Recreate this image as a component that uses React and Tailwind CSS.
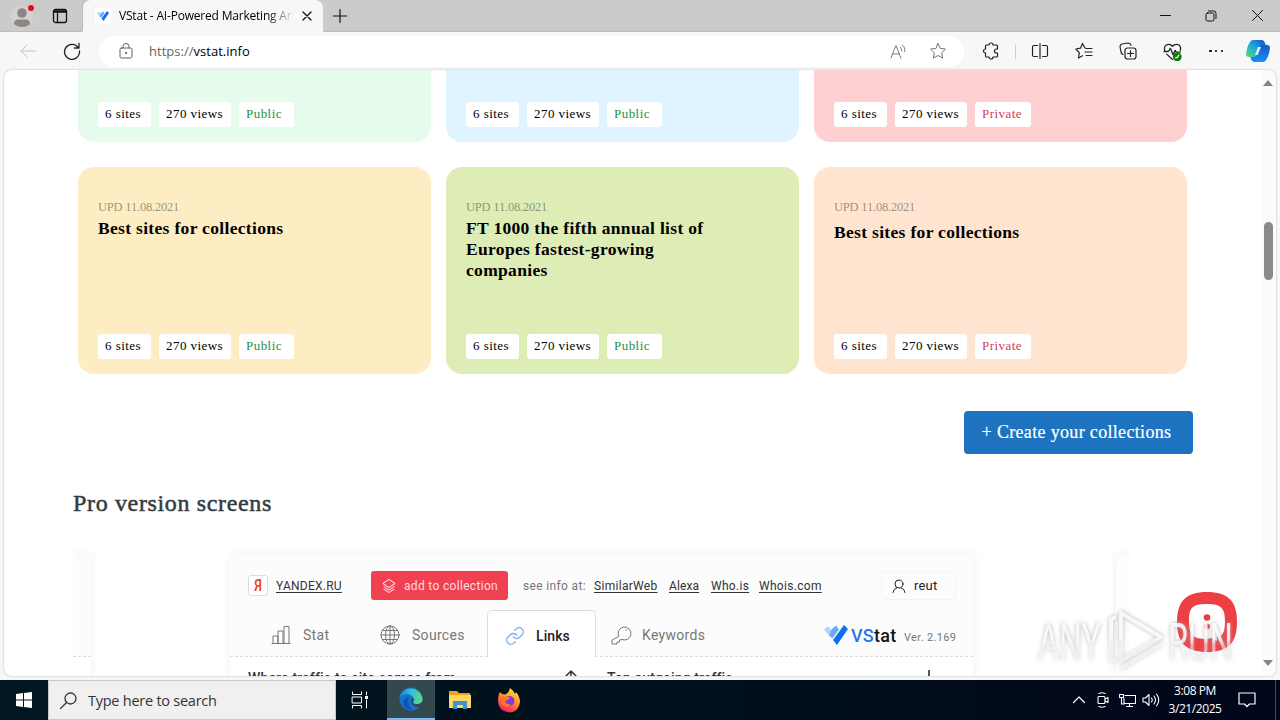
import { VscLayers } from "react-icons/vsc";

const uiFont = "font-['Open_Sans','Noto_Sans',sans-serif]";

const topCards = [
  { color: "bg-[#e7fbec]", width: "w-[353px]", access: "Public" },
  { color: "bg-[#dff4fe]", width: "w-[353px]", access: "Public" },
  { color: "bg-[#fed0d1]", width: "w-[373px]", access: "Private" },
];

const cards = [
  {
    color: "bg-[#feecc2]",
    width: "w-[353px]",
    access: "Public",
    title: "Best sites for collections",
    gap: "mt-[2px]",
  },
  {
    color: "bg-[#deecb6]",
    width: "w-[353px]",
    access: "Public",
    title: "FT 1000 the fifth annual list of Europes fastest-growing companies",
    gap: "mt-[2px]",
  },
  {
    color: "bg-[#ffe4cf]",
    width: "w-[373px]",
    access: "Private",
    title: "Best sites for collections",
    gap: "mt-[6px]",
  },
];

const Icon = ({ size = 18, box = 18, stroke = 1, className = "", children }) => (
  <svg
    width={size}
    height={size}
    viewBox={`0 0 ${box} ${box}`}
    fill="none"
    stroke="currentColor"
    strokeWidth={stroke}
    strokeLinecap="round"
    strokeLinejoin="round"
    className={`shrink-0 ${className}`}
  >
    {children}
  </svg>
);

const VLogo = ({ width, height }) => (
  <svg width={width} height={height} viewBox="0 0 24 20" className="shrink-0">
    <path d="M0 4.500L4 1l3.500 4.500L4 9.500z" fill="#b5d2fb" />
    <path d="M7.500 4.500L12 .5l3 4L8.500 13.500 4.500 10z" fill="#6cabfb" />
    <path d="M20 0l4 4-11 16-4-5z" fill="#0d6ff2" />
  </svg>
);

const TabBar = () => (
  <div className="flex h-8 bg-[#cbcbcb] text-[#111]">
    <div className="flex h-8 w-[83px] items-center rounded-br-md border-r border-b border-[#bcbcbc]">
      <svg width="26" height="24" viewBox="0 0 26 24" className="ml-[10px] shrink-0">
        <circle cx="12" cy="13" r="11" fill="#d4d2d0" />
        <circle cx="12" cy="9" r="4.800" fill="#8b8784" />
        <path d="M4 20q0-4.500 4-4.500h8q4 0 4 4.500-3 3-8 3t-8-3" fill="#8b8784" />
        <circle cx="21" cy="4" r="3" fill="#e00b1c" />
      </svg>
      <Icon size={16} box={16} stroke={1.3} className="ml-4">
        <rect x="1.500" y="1.500" width="13" height="13" rx="2" />
        <path d="M2 4h12M2 3h12M5.500 4v10" />
      </Icon>
    </div>
    <div className="flex h-8 w-60 items-center rounded-t-lg bg-[#f7f7f7]">
      <div className="ml-3 flex size-4 items-center justify-center bg-white">
        <VLogo width={12} height={10} />
      </div>
      <span className="ml-2 w-[173px] overflow-hidden text-[12px] tracking-[-0.2px] whitespace-nowrap text-black [mask-image:linear-gradient(to_right,black_148px,transparent_175px)]">
        VStat - AI-Powered Marketing Analytics
      </span>
      <Icon size={10} box={10} stroke={1.3} className="ml-[10px]">
        <path d="M1 1l8 8M9 1l-8 8" />
      </Icon>
    </div>
    <div className="flex flex-1 items-center border-b border-[#bcbcbc]">
      <Icon size={14} box={14} stroke={1.2} className="ml-[10px]">
        <path d="M7 .5v13M.5 7h13" />
      </Icon>
      <Icon size={11} box={11} className="ml-auto">
        <path d="M.5 5.500h10" />
      </Icon>
      <Icon size={12} box={12} className="ml-[34px]">
        <rect x="1" y="3" width="8" height="8" rx="1.500" />
        <path d="M3.500 1h5q2.500 0 2.500 2.500v5" />
      </Icon>
      <Icon size={11} box={11} className="mr-[17px] ml-[35px]">
        <path d="M.5.5l10 10M10.500.5l-10 10" />
      </Icon>
    </div>
  </div>
);

const AddressBar = () => (
  <div className="flex h-[38px] items-center bg-[#f7f7f7] text-[#222]">
    <Icon size={16} box={16} className="ml-5 text-[#c4c4c4]">
      <path d="M15.500 8H1M7 2L1 8l6 6" />
    </Icon>
    <Icon size={18} stroke={1.3} className="ml-[27px]">
      <path d="M15.500 6A7.500 7.500 0 1 0 16.500 9M16 1.500V6h-4.500" />
    </Icon>
    <div className="ml-[18px] flex h-[31px] w-[865px] items-center rounded-full bg-white">
      <Icon size={16} box={16} className="ml-[19px] text-[#606060]">
        <rect x="2" y="5" width="12" height="10" rx="1.500" />
        <path d="M5 5V3.500a3 3 0 0 1 6 0V5" />
        <circle cx="8" cy="10" r=".6" fill="currentColor" />
      </Icon>
      <span className="ml-[15px] pt-px text-[13px] tracking-[0.02px] text-black">
        <span className="text-[#666]">https://</span>vstat.info
      </span>
      <Icon size={17} className="ml-auto text-[#757575]">
        <path d="M1 16L6 3h.6L11.500 16M2.800 11.500h7M11 4.500q2 1.500 1.500 4M13 2q3.500 2.500 2.500 7" />
      </Icon>
      <Icon size={18} className="mr-[17px] ml-[22px] text-[#757575]">
        <path d="M9 1.500l2.300 4.900 5.200.7-3.800 3.700.9 5.300L9 13.500l-4.600 2.600.9-5.300L1.500 7.100l5.200-.7z" />
      </Icon>
    </div>
    <Icon size={18} stroke={1.2} className="ml-[18px]">
      <path d="M4.500 3H7a2 2 0 0 1 4 0h3.500q1 0 1 1v3h-1a2 2 0 0 0 0 4h1v3q0 1-1 1H11a2 2 0 0 1-4 0H4.500q-1 0-1-1v-3a2 2 0 0 1 0-4V4q0-1 1-1z" />
    </Icon>
    <div className="ml-[15px] h-[15px] w-px bg-[#d0d0d0]" />
    <Icon size={18} stroke={1.2} className="ml-[15px]">
      <path d="M6.500 3.500H3q-1.500 0-1.500 1.500v8q0 1.500 1.500 1.500h3.500M11.500 3.500H15q1.500 0 1.500 1.500v8q0 1.500-1.500 1.500h-3.500M9 1.500v15" />
    </Icon>
    <Icon size={18} stroke={1.2} className="ml-[26px]">
      <path d="M10 6L7.500 1.500 5.500 6.200.8 7l3.500 3.700-.8 5.300 4-2.300M11 6.500h6M10 10h7M11 13.500h6" />
    </Icon>
    <Icon size={18} stroke={1.2} className="ml-[26px]">
      <rect x="6" y="6" width="11" height="11" rx="2.500" />
      <path d="M11.500 8.500v6M8.500 11.500h6M4 12.500Q2.500 12 2 10L1 4.500Q1 2.500 3 2l6-1q2.500 0 3 2.500" />
    </Icon>
    <Icon size={19} stroke={1.2} className="ml-[26px]">
      <path d="M1.500 8Q.5 3 5 2.200q2.800-.2 4 2 1.500-2.200 4.200-2 4.300.8 3.300 5.800M1 9h4l2-3 2.500 6L11.500 8l1 1.500h4M3.500 11.500L9 16.500" />
      <circle cx="13.500" cy="14" r="3.600" fill="#107c10" stroke="#107c10" />
      <path d="M12 15l1.500-.5 1.500-2" stroke="#fff" />
    </Icon>
    <div className="ml-[25px] flex w-[18px] justify-between px-[2px]">
      <span className="size-[2.500px] rounded-full bg-black" />
      <span className="size-[2.500px] rounded-full bg-black" />
      <span className="size-[2.500px] rounded-full bg-black" />
    </div>
    <svg width="24" height="24" viewBox="0 0 24 24" className="ml-[21px] shrink-0">
      <defs>
        <linearGradient id="copilotA" x1="1" y1="0" x2="0" y2="1">
          <stop stopColor="#174ebd" />
          <stop offset=".5" stopColor="#18a8e0" />
          <stop offset="1" stopColor="#61d96e" />
        </linearGradient>
        <linearGradient id="copilotB" x1="0" y1="0" x2="0" y2="1">
          <stop stopColor="#155bc7" />
          <stop offset="1" stopColor="#1690f4" />
        </linearGradient>
      </defs>
      <path d="M7 1h9q2 0 3 3l1 3h-4q-2 0-3 2l-3 7q-1 2-3 2H3q-3 0-3-3Q1 7 4 3q1-2 3-2z" fill="url(#copilotA)" />
      <path d="M17 6h4q3 0 3 3-1 8-4 12-1 2-3 2H8q-2 0-3-3l-.5-2H7q2 0 3-2l3-7q1-3 4-3z" fill="url(#copilotB)" />
      <path d="M12 8h3l-3.500 8H9z" fill="#e7f7ff" />
    </svg>
  </div>
);

const Tags = ({ access }) => (
  <div className="flex gap-2 text-[13px] leading-[24px] tracking-[0.45px] whitespace-nowrap text-black">
    <span className="h-[25px] w-[53px] rounded-[3px] bg-white pl-[7px]">6 sites</span>
    <span className="h-[25px] w-[72px] rounded-[3px] bg-white pl-[7px]">270 views</span>
    {access === "Public" ? (
      <span className="h-[25px] w-[55px] rounded-[3px] bg-white pl-[7px] text-[#209044]">Public</span>
    ) : (
      <span className="h-[25px] w-[56px] rounded-[3px] bg-white pl-[7px] text-[#d5405a]">Private</span>
    )}
  </div>
);

const Collections = () => (
  <>
    <div className="flex gap-[15px] pl-[74px]">
      {topCards.map((card, index) => (
        <div key={index} className={`flex h-[72px] items-end rounded-b-2xl pb-[15px] pl-5 ${card.color} ${card.width}`}>
          <Tags access={card.access} />
        </div>
      ))}
    </div>
    <div className="mt-[25px] flex gap-[15px] pl-[74px]">
      {cards.map((card, index) => (
        <div
          key={index}
          className={`flex h-[207px] flex-col rounded-2xl pt-8 pb-[15px] pl-5 ${card.color} ${card.width}`}
        >
          <span className="text-[12.500px] leading-[17px] tracking-[-0.2px] text-black/40">UPD 11.08.2021</span>
          <h3 className={`w-[250px] text-[17.500px] leading-[21px] font-bold tracking-[0.32px] text-black ${card.gap}`}>
            {card.title}
          </h3>
          <div className="mt-auto">
            <Tags access={card.access} />
          </div>
        </div>
      ))}
    </div>
    <button className="mt-[37px] ml-[960px] block h-[43px] w-[229px] rounded bg-[#1d73c0] pr-[4px] text-[18px] tracking-[0.33px] whitespace-nowrap text-white [-webkit-text-stroke:0.2px_white]">
      + Create your collections
    </button>
  </>
);

const SlideHeader = () => (
  <div className="flex h-[103px] flex-col border-b border-dashed border-[#ddd] bg-[#fcfcfc]">
    <div className="flex h-[57px] items-center pt-[7px] pl-[18px] text-[12px]">
      <span className="flex h-[21px] w-5 items-center justify-center rounded-[3px] border border-[#ddd] bg-white text-[17px] font-bold text-[#ea4b43]">
        <span className="scale-x-75">Я</span>
      </span>
      <span className="ml-2 w-[95px] tracking-[0.25px] text-[#333] underline underline-offset-2">YANDEX.RU</span>
      <span className="flex h-[29px] w-[137px] items-center rounded-[3px] bg-[#f04152] tracking-[0.32px] whitespace-nowrap text-[#ffdce0]">
        <VscLayers className="mr-[7px] ml-[10px] size-4" />
        add to collection
      </span>
      <span className="ml-[15px] w-[71px] tracking-[0.35px] whitespace-nowrap text-[#777]">see info at:</span>
      <span className="w-[75px] tracking-[0.3px] text-[#333] underline underline-offset-2">SimilarWeb</span>
      <span className="w-[42px] tracking-[0.1px] text-[#333] underline underline-offset-2">Alexa</span>
      <span className="w-[48px] tracking-[0.3px] text-[#333] underline underline-offset-2">Who.is</span>
      <span className="w-[122px] tracking-[0.3px] text-[#333] underline underline-offset-2">Whois.com</span>
      <span className="flex h-[29px] w-[75px] items-center rounded border border-[#f3f3f3] text-[13px] tracking-[0.2px] text-[#222]">
        <Icon size={14} box={14} className="mr-[8px] ml-[10px]">
          <circle cx="7" cy="5" r="4" />
          <path d="M1 13.500Q1.500 9.500 5 8.700M13 13.500Q12.500 9.500 9 8.700" />
        </Icon>
        reut
      </span>
    </div>
    <div className="flex h-[46px] text-[14px] tracking-[0.3px] whitespace-nowrap text-[#777]">
      <div className="flex items-center pt-1">
        <Icon size={20} box={20} className="ml-[41px]">
          <path d="M1 18.500h18M2 18v-7h5v7M7 18V6h5v12M13 18V1.500h5V18" />
        </Icon>
        <span className="ml-3 w-[77px] pt-px">Stat</span>
        <Icon size={20} box={20}>
          <circle cx="10" cy="10" r="9" />
          <ellipse cx="10" cy="10" rx="4.500" ry="9" />
          <path d="M1 10h18M10 1v18M2.500 5.500h15M2.500 14.500h15" />
        </Icon>
        <span className="ml-3 w-[75px] pt-px">Sources</span>
      </div>
      <div className="-mb-px flex h-[47px] w-[109px] items-center rounded-t-[5px] border border-b-0 border-[#ddd] bg-white pt-1 text-[#222]">
        <Icon size={20} box={24} stroke={1.6} className="ml-[17px] text-[#83acec]">
          <path d="M10 13a5 5 0 0 0 7.540.54l3-3a5 5 0 0 0-7.070-7.070l-1.720 1.710" />
          <path d="M14 11a5 5 0 0 0-7.540-.54l-3 3a5 5 0 0 0 7.070 7.070l1.710-1.710" />
        </Icon>
        <span className="ml-[11px] pt-px font-medium tracking-[0.1px]">Links</span>
      </div>
      <div className="flex items-center pt-1">
        <Icon size={21} box={21} className="ml-[15px]">
          <path d="M7.500 11A6.500 6.500 0 1 1 11 14.500L8.500 15v2H6v2H1v-3.500zM15 5h.5" />
        </Icon>
        <span className="ml-[10px] w-[182px] pt-px">Keywords</span>
        <VLogo width={24} height={20} />
        <span className="ml-[3px] w-[53px] pt-px text-[18px] font-medium tracking-[0.25px] text-[#151515]">
          <span className="text-[#1d78f2]">VS</span>tat
        </span>
        <span className="pt-[6px] text-[11px] tracking-[0.33px]">Ver. 2.169</span>
      </div>
    </div>
  </div>
);

const Screens = () => (
  <>
    <h2 className="mt-[35px] ml-[69px] h-[29px] text-[24px] leading-[29px] tracking-[0.65px] text-[#343a40] [-webkit-text-stroke:0.5px_#343a40]">
      Pro version screens
    </h2>
    <div className="mt-[27px] ml-[69px] flex h-[150px] w-[1057px] justify-between overflow-hidden pt-[9px] font-['Roboto',sans-serif]">
      <div className="w-[18px] shadow-[0_0_10px_#f0f0f0]">
        <div className="h-[103px] border-b border-dashed border-[#ddd] bg-[#fcfcfc]" />
      </div>
      <div className="ml-[-4px] w-[743px] shadow-[0_0_10px_#f0f0f0]">
        <SlideHeader />
        <div className="flex pt-[11px] pl-[18px] text-[14px] leading-[20px] font-medium tracking-[0.17px] text-[#333]">
          <span className="w-[317px]">Where traffic to site comes from</span>
          <Icon size={12} box={12} stroke={1.5} className="mt-[2px] mr-[30px]">
            <path d="M6 12V1M1 6l5-5 5 5" />
          </Icon>
          <span className="w-[321px] tracking-[0.1px]">Top outgoing traffic</span>
          <span className="mt-[2px] h-3 w-[1.500px] bg-[#555]" />
        </div>
      </div>
      <div className="w-[14px] bg-[#fdfdfd] shadow-[0_0_10px_#f0f0f0]" />
    </div>
  </>
);

const Watermark = () => (
  <svg
    width="200"
    height="72"
    viewBox="0 0 200 72"
    className="absolute top-[603px] left-[1035px] drop-shadow-[0_0_2px_#aaa]"
  >
    <defs>
      <linearGradient id="markFade" x1="0" y1="0" x2="0" y2="1">
        <stop offset=".45" stopColor="#fff" stopOpacity=".85" />
        <stop offset=".55" stopColor="#fff" stopOpacity=".5" />
      </linearGradient>
    </defs>
    <g fontFamily="Roboto, sans-serif" fontSize="51" fill="url(#markFade)">
      <text x="3" y="57" textLength="63" lengthAdjust="spacingAndGlyphs">ANY</text>
      <text x="133" y="57" textLength="65" lengthAdjust="spacingAndGlyphs">RUN</text>
    </g>
    <path
      d="M86 10v48l40-24zM81 14l-5 2v42l5-2M86 65l42-25"
      fill="none"
      stroke="url(#markFade)"
      strokeWidth="4"
      strokeLinejoin="round"
    />
  </svg>
);

const Taskbar = () => (
  <div className="flex h-10 items-center bg-linear-to-r from-[#00171f] via-[#00111c] to-[#02061b] text-white">
    <svg width="16" height="16" viewBox="0 0 16 16" fill="white" className="mx-4 shrink-0">
      <path d="M0 2l7-1v6.500H0zM8 .9L16 0v7.500H8zM0 8.500h7V15l-7-1zM8 8.500h8V16l-8-1z" />
    </svg>
    <div className="flex h-10 w-72 items-center border border-[#c9c9c9] bg-[#f0f0f0] text-[#333]">
      <Icon size={17} box={17} stroke={1.3} className="ml-[11px]">
        <circle cx="10.500" cy="6.500" r="5.500" />
        <path d="M6.500 10.500l-6 6" />
      </Icon>
      <span className="ml-[11px] pt-[2px] text-[14.500px] tracking-[-0.25px]">Type here to search</span>
    </div>
    <Icon size={18} className="ml-[15px]">
      <path d="M1.500 1v2.500h9V1M1.500 6h9v6h-9zM1.500 17v-2.500h9V17M15.500 1v3M15.500 9v8" />
      <path d="M14 5h3v3h-3z" fill="white" stroke="none" />
    </Icon>
    <div className="ml-[18px] flex h-10 w-12 items-center justify-center border-b-2 border-[#76b9ed] bg-[#344850]">
      <svg width="24" height="24" viewBox="0 0 24 24">
        <defs>
          <linearGradient id="edgeTop" x1="0" x2="1">
            <stop stopColor="#1a86d2" />
            <stop offset=".5" stopColor="#31c0d6" />
            <stop offset="1" stopColor="#62dc72" />
          </linearGradient>
        </defs>
        <circle cx="12" cy="12" r="11.500" fill="#1672cc" />
        <path d="M.5 10.500A11.700 11.700 0 0 1 23.500 12q0 4.500-4.500 5-5 .3-5-2 1.800-2 .5-4.500Q12 7 7.500 7 3 7 .5 10.500z" fill="url(#edgeTop)" />
        <path d="M10 10.500q-3 7 4 12.500Q4 23 4 15q1-4.500 6-4.500z" fill="#0d55ad" />
        <path d="M14 15q0 2.500 5 2.300 2.500-.3 4-2.300l2 4-3.500 1q-8 1-9.500-5 0-2.500 2-4 1.500 2 0 4z" fill="#344850" />
      </svg>
    </div>
    <svg width="22" height="20" viewBox="0 0 22 20" className="ml-[14px] shrink-0">
      <path d="M0 1h8l2 2h11v15H0z" fill="#eba51d" />
      <path d="M0 5h22v13H0z" fill="#ffd765" />
      <path d="M4 19v-8h14v8h-4v-4H8v4z" fill="#3b94d0" />
    </svg>
    <svg width="24" height="25" viewBox="0 0 24 25" className="ml-[26px] shrink-0">
      <defs>
        <linearGradient id="fox" x1=".8" y1="0" x2=".3" y2="1">
          <stop stopColor="#fff044" />
          <stop offset=".45" stopColor="#ff9525" />
          <stop offset="1" stopColor="#f5156c" />
        </linearGradient>
      </defs>
      <path d="M3 4l2 2 3 .5Q12 5 13 0q4 3 5 6l1-2q4 5 4 10-1 10-11 10.500Q1 23 1 13q0-6 2-9z" fill="url(#fox)" />
      <circle cx="12.500" cy="13" r="5" fill="#8b38d8" />
      <path d="M6 8l7 1-2 3-3 1q1 4 6 3-4 5-9 1-2-5 1-9z" fill="#ff7b29" />
    </svg>
    <Icon size={14} box={14} stroke={1.2} className="ml-auto">
      <path d="M1.500 9.500L7 4l5.500 5.500" />
    </Icon>
    <Icon size={16} box={16} stroke={1.1} className="ml-[9px]">
      <rect x="3" y="4.500" width="7" height="7" rx="1" />
      <path d="M10 7l3-1.500v5L10 9M4 1.500q3-1.500 6 0M4 14.500q3 1.500 6 0" />
    </Icon>
    <Icon size={17} box={17} stroke={1.1} className="ml-[8px]">
      <path d="M6 3.500h10.500v8H5v-5M10.500 11.500v3M7.500 14.500h6M.5 2.500h4v3h-4zM2.500 6v6H5" />
    </Icon>
    <Icon size={18} stroke={1.1} className="ml-[6px]">
      <path d="M1 7h2.500L7 3.500v11L3.500 11H1zM9.500 7q1.500 2 0 4M12 5q3 4 0 8M14.500 3q4.500 6 0 12" />
    </Icon>
    <div className="ml-[8px] w-[54px] text-center text-[12px] leading-[18px] tracking-[-0.42px] whitespace-nowrap">
      <div>3:08 PM</div>
      <div>3/21/2025</div>
    </div>
    <Icon size={18} stroke={1.2} className="mr-[19px] ml-[16px]">
      <path d="M1 2h16v11h-5.500L9 15.500 6.500 13H1z" />
    </Icon>
    <div className="mr-[4px] h-10 w-px bg-[#444958]" />
  </div>
);

const App = () => (
  <div className={`relative flex h-[720px] w-[1280px] flex-col overflow-hidden bg-[#f7f7f7] ${uiFont}`}>
    <TabBar />
    <AddressBar />
    <main className="mx-[4px] flex h-[606px] overflow-hidden rounded-lg bg-white shadow-[0_0_2px_#aaa]">
      <div className="w-[1258px] overflow-hidden font-['Liberation_Serif',serif]">
        <Collections />
        <Screens />
      </div>
      <div className="flex flex-1 flex-col items-center bg-[#fbfbfb] pr-[2px]">
        <svg width="10" height="6" viewBox="0 0 10 6" className="mt-[10px]">
          <path d="M0 6L5 0l5 6z" fill="#858585" />
        </svg>
        <div className="mt-[136px] h-[58px] w-[9px] rounded-full bg-[#8a8a8a]" />
        <svg width="10" height="6" viewBox="0 0 10 6" className="mt-auto mb-[10px]">
          <path d="M0 0h10L5 6z" fill="#858585" />
        </svg>
      </div>
    </main>
    <div className="h-1 shrink-0" />
    <Taskbar />
    {/* floating chat button */}
    <svg width="60" height="60" viewBox="0 0 60 60" className="absolute top-[592px] left-[1177px]">
      <path d="M30 0C51 0 60 9 60 30S51 60 30 60 0 51 0 30 9 0 30 0z" fill="#ee3f45" />
      <path d="M30 12c14 0 18 4 18 17 0 11-2 15-8 16v4l-5-3-5 1c-14 0-18-4-18-18s4-17 18-17z" fill="#fff" />
      <circle cx="30" cy="25.500" r="3.300" fill="#e83d43" />
      <circle cx="30" cy="34.500" r="3" fill="#e83d43" />
    </svg>
    <Watermark />
  </div>
);

export default App;
